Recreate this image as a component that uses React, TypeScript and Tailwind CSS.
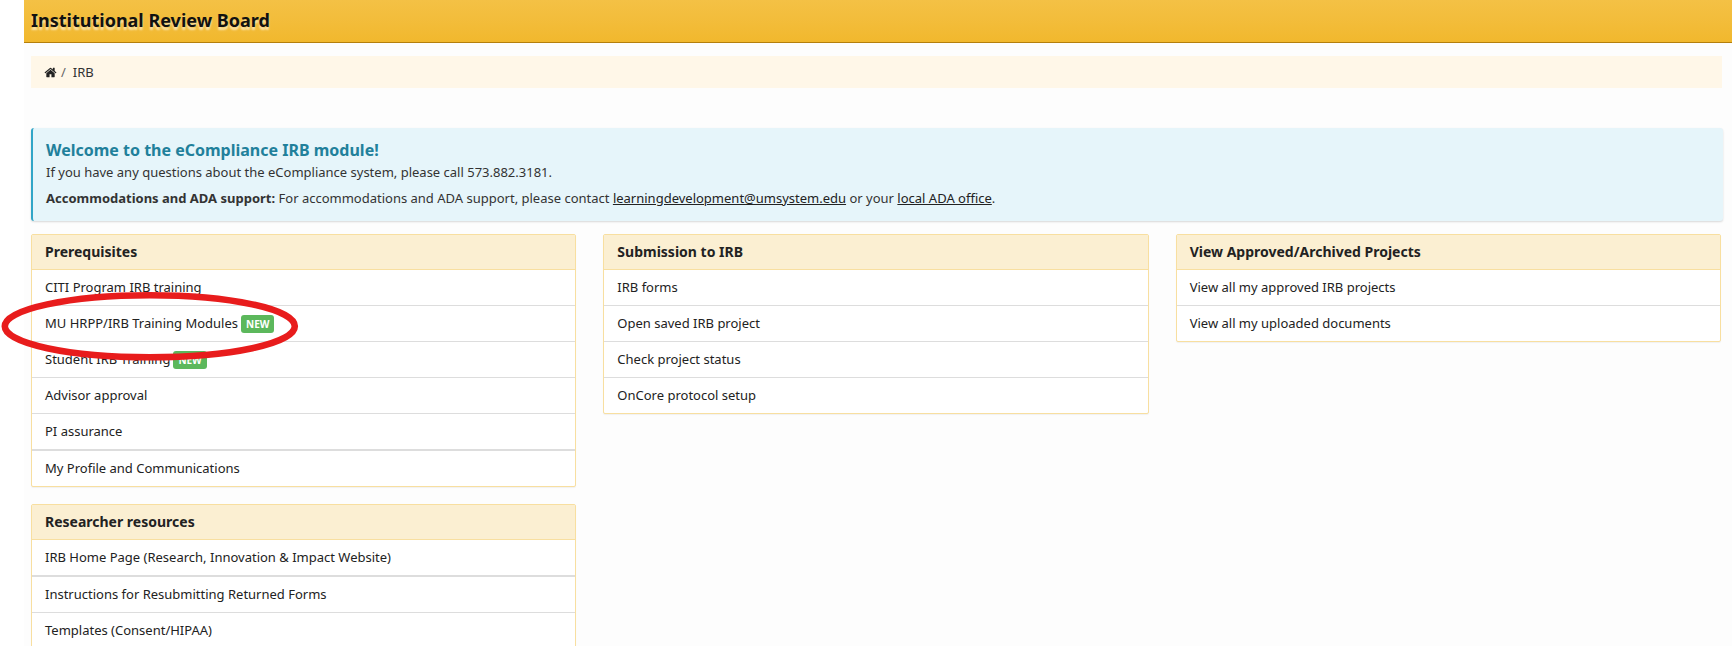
import React from 'react';
import clsx from 'clsx';

interface LinkItem {
    label: string;
    isNew?: boolean;
    circled?: boolean;
    groupEnd?: boolean; // heavier divider under the row
}

interface LinkPanelProps {
    title: string;
    items: LinkItem[];
}

const prerequisites: LinkItem[] = [
    { label: 'CITI Program IRB training' },
    { label: 'MU HRPP/IRB Training Modules', isNew: true, circled: true },
    { label: 'Student IRB Training', isNew: true },
    { label: 'Advisor approval' },
    { label: 'PI assurance', groupEnd: true },
    { label: 'My Profile and Communications' },
];

const resources: LinkItem[] = [
    { label: 'IRB Home Page (Research, Innovation & Impact Website)', groupEnd: true },
    { label: 'Instructions for Resubmitting Returned Forms' },
    { label: 'Templates (Consent/HIPAA)' },
];

const submission: LinkItem[] = [
    { label: 'IRB forms' },
    { label: 'Open saved IRB project' },
    { label: 'Check project status' },
    { label: 'OnCore protocol setup' },
];

const archive: LinkItem[] = [
    { label: 'View all my approved IRB projects' },
    { label: 'View all my uploaded documents' },
];

const HomeIcon: React.FC = () => (
    <svg className="size-[13px]" viewBox="0 0 1792 1792" fill="currentColor" aria-hidden="true">
        <path d="M1472 992v480q0 26-19 45t-45 19h-384v-384h-256v384h-384q-26 0-45-19t-19-45v-480q0-1 .5-3t.5-3l575-474 575 474q1 2 1 6zm223-69l-62 74q-8 9-21 11h-3q-13 0-21-7l-692-577-692 577q-12 8-24 7-13-2-21-11l-62-74q-8-10-7-23.5t11-21.5l719-599q32-26 76-26t76 26l244 204v-195q0-14 9-23t23-9h192q14 0 23 9t9 23v408l219 182q10 8 11 21.5t-7 23.5z" />
    </svg>
);

// Hand-drawn style marker around a row
const RedCircle: React.FC = () => (
    <svg
        className="pointer-events-none absolute -top-[14px] -left-[31px] h-[69px] w-[298px]"
        viewBox="0 0 298 69"
        fill="none"
        aria-hidden="true"
    >
        <ellipse cx="148.8" cy="34.3" rx="145" ry="31" stroke="#e81c1c" strokeWidth="6.6" />
    </svg>
);

const LinkPanel: React.FC<LinkPanelProps> = ({ title, items }) => (
    <section className="rounded-xs border border-[#f8dfa0] bg-white shadow-[0_1px_1px_rgba(0,0,0,0.05)]">
        <h2 className="border-b border-[#f8dfa0] bg-[#fbefd2] px-[13px] py-[7px] text-sm leading-5 font-bold text-[#222]">
            {title}
        </h2>
        <ul>
            {items.map((item) => (
                <li
                    key={item.label}
                    className={clsx(
                        'border-[#ddd] last:border-b-0',
                        item.groupEnd ? 'border-b-2' : 'border-b',
                        item.circled && 'relative',
                    )}
                >
                    <a href="#" className="flex h-[35px] items-center gap-[3px] px-[13px] pb-0.5">
                        {item.label}
                        {item.isNew && (
                            <span className="mt-[3px] rounded-[3px] bg-[#5cb85c] px-[5px] text-[10px] leading-[18px] font-bold text-white">
                                NEW
                            </span>
                        )}
                    </a>
                    {item.circled && <RedCircle />}
                </li>
            ))}
        </ul>
    </section>
);

const App: React.FC = () => {
    return (
        <div className="min-h-screen bg-white pl-6 font-['Noto_Sans',sans-serif] text-[13px] leading-5 text-[#222]">
            <div className="min-h-screen bg-[#fdfdfd]">
                <header className="border-b border-[#b47f0c] bg-linear-to-b from-[#f4c145] to-[#f1b82d] px-[7px] pt-[7px] pb-[9px]">
                    <h1 className="text-lg leading-[26px] font-bold text-[#111] [text-shadow:0_3px_2px_rgba(255,255,255,0.6)]">
                        Institutional Review Board
                    </h1>
                </header>

                <main className="pt-[13px] pr-[9px] pl-[7px]">
                    <nav className="mr-px flex items-center bg-[#fff7e8] px-[13px] py-1.5" aria-label="Breadcrumb">
                        <a href="#" aria-label="Home">
                            <HomeIcon />
                        </a>
                        <span className="px-1 text-[#666]">/</span>
                        <span className="pl-[3px] text-[#333]">IRB</span>
                    </nav>

                    <div className="mt-10 mb-[13px] rounded-[3px] border-l-2 border-[#31a5c7] bg-[#e6f5fa] px-[13px] pt-3 pb-[13px] text-[#333] shadow-[0_1px_2px_rgba(0,0,0,0.15)]">
                        <h2 className="text-base leading-5 font-bold text-[#21809b]">
                            Welcome to the eCompliance IRB module!
                        </h2>
                        <p className="mt-0.5">
                            If you have any questions about the eCompliance system, please call 573.882.3181.
                        </p>
                        <p className="mt-1.5">
                            <strong>Accommodations and ADA support:</strong> For accommodations and ADA support, please
                            contact{' '}
                            <a href="mailto:learningdevelopment@umsystem.edu" className="text-[#222] underline">
                                learningdevelopment@umsystem.edu
                            </a>{' '}
                            or your{' '}
                            <a href="#" className="text-[#222] underline">
                                local ADA office
                            </a>
                            .
                        </p>
                    </div>

                    <div className="mr-0.5 grid grid-cols-3 items-start gap-[27px]">
                        <div className="flex flex-col gap-[17px]">
                            <LinkPanel title="Prerequisites" items={prerequisites} />
                            <LinkPanel title="Researcher resources" items={resources} />
                        </div>
                        <LinkPanel title="Submission to IRB" items={submission} />
                        <LinkPanel title="View Approved/Archived Projects" items={archive} />
                    </div>
                </main>
            </div>
        </div>
    );
};

export default App;
